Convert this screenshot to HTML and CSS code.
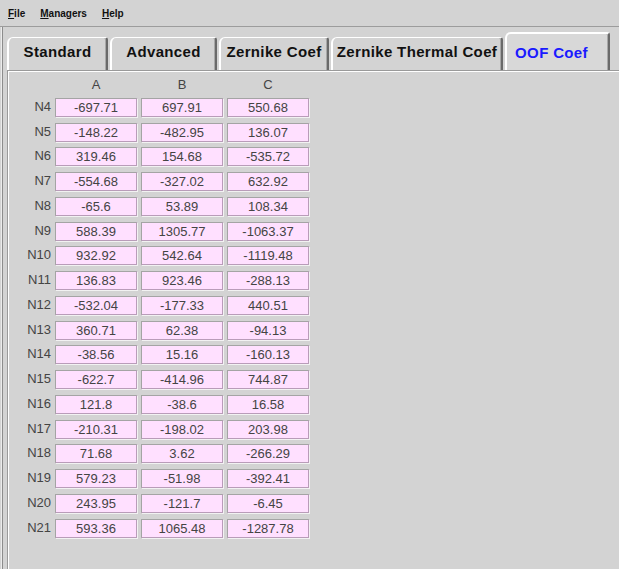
FILE: index.html
```html
<!DOCTYPE html>
<html lang="en">
<head>
  <meta charset="UTF-8">
  <title>OOF Coef</title>
  <link rel="stylesheet" href="styles.css">
</head>
<body>
  <div class="menubar">
    <span class="menu"><u>F</u>ile</span>
    <span class="menu"><u>M</u>anagers</span>
    <span class="menu"><u>H</u>elp</span>
  </div>

  <div class="frame">
    <div class="tabs">
      <div class="tab">Standard</div>
      <div class="tab">Advanced</div>
      <div class="tab">Zernike Coef</div>
      <div class="tab">Zernike Thermal Coef</div>
      <div class="tab selected">OOF Coef</div>
    </div>

    <div class="panel">
      <div class="coef-grid">
        <span></span><span class="col-head">A</span><span class="col-head">B</span><span class="col-head">C</span>

        <span class="row-label">N4</span><span class="cell">-697.71</span><span class="cell">697.91</span><span class="cell">550.68</span>
        <span class="row-label">N5</span><span class="cell">-148.22</span><span class="cell">-482.95</span><span class="cell">136.07</span>
        <span class="row-label">N6</span><span class="cell">319.46</span><span class="cell">154.68</span><span class="cell">-535.72</span>
        <span class="row-label">N7</span><span class="cell">-554.68</span><span class="cell">-327.02</span><span class="cell">632.92</span>
        <span class="row-label">N8</span><span class="cell">-65.6</span><span class="cell">53.89</span><span class="cell">108.34</span>
        <span class="row-label">N9</span><span class="cell">588.39</span><span class="cell">1305.77</span><span class="cell">-1063.37</span>
        <span class="row-label">N10</span><span class="cell">932.92</span><span class="cell">542.64</span><span class="cell">-1119.48</span>
        <span class="row-label">N11</span><span class="cell">136.83</span><span class="cell">923.46</span><span class="cell">-288.13</span>
        <span class="row-label">N12</span><span class="cell">-532.04</span><span class="cell">-177.33</span><span class="cell">440.51</span>
        <span class="row-label">N13</span><span class="cell">360.71</span><span class="cell">62.38</span><span class="cell">-94.13</span>
        <span class="row-label">N14</span><span class="cell">-38.56</span><span class="cell">15.16</span><span class="cell">-160.13</span>
        <span class="row-label">N15</span><span class="cell">-622.7</span><span class="cell">-414.96</span><span class="cell">744.87</span>
        <span class="row-label">N16</span><span class="cell">121.8</span><span class="cell">-38.6</span><span class="cell">16.58</span>
        <span class="row-label">N17</span><span class="cell">-210.31</span><span class="cell">-198.02</span><span class="cell">203.98</span>
        <span class="row-label">N18</span><span class="cell">71.68</span><span class="cell">3.62</span><span class="cell">-266.29</span>
        <span class="row-label">N19</span><span class="cell">579.23</span><span class="cell">-51.98</span><span class="cell">-392.41</span>
        <span class="row-label">N20</span><span class="cell">243.95</span><span class="cell">-121.7</span><span class="cell">-6.45</span>
        <span class="row-label">N21</span><span class="cell">593.36</span><span class="cell">1065.48</span><span class="cell">-1287.78</span>
      </div>
    </div>
  </div>
</body>
</html>
```

FILE: styles.css
```css
html, body {
  height: 100%;
}
body {
  margin: 0;
  background: #d3d3d3;
  font-family: "Liberation Sans", Arial, sans-serif;
  color: #222;
  overflow: hidden;
  display: flex;
  flex-direction: column;
}
.menubar {
  display: flex;
  gap: 15px;
  height: 26px;
  flex: none;
  align-items: center;
  padding-left: 8px;
  border-bottom: 1px solid #9c9c9c;
  font-size: 10px;
  font-weight: bold;
  color: #111;
}
.menu u {
  text-decoration-thickness: 1px;
}
.frame {
  flex: 1;
  display: flex;
  flex-direction: column;
  margin-left: 2px;
  padding-left: 4px;
  border-left: 1px solid #8c8c8c;
  box-shadow: -1px 0 0 #ececec;
}
.tabs {
  display: flex;
  align-items: flex-end;
  gap: 2px;
  padding-top: 5px;
  height: 38px;
  flex: none;
}
.tab {
  box-sizing: border-box;
  height: 33px;
  display: flex;
  align-items: center;
  justify-content: center;
  padding-bottom: 5px;
  font-size: 15px;
  font-weight: bold;
  letter-spacing: 0.35px;
  color: #111;
  border-top: 1px solid #fff;
  border-left: 2px solid #fff;
  border-right: 2px solid #6a6a6a;
  border-top-left-radius: 6px;
  border-top-right-radius: 3px;
  box-shadow: inset -1px 0 0 #a8a8a8;
}
.tab:nth-child(1) { width: 101px; }
.tab:nth-child(2) { width: 107px; }
.tab:nth-child(3) { width: 110px; }
.tab:nth-child(4) { width: 172px; }
.tab.selected {
  width: 105px;
  height: 38px;
  padding-bottom: 0;
  padding-right: 12px;
  color: #1a1aff;
  background: #d8d8d8;
  border-top: 2px solid #fff;
}
.panel {
  flex: 1;
  border-top: 1px solid #9a9a9a;
  border-left: 1px solid #9a9a9a;
  box-shadow: inset 1px 1px 0 #fff;
  padding: 6px 0 0 1px;
}
.coef-grid {
  display: grid;
  grid-template-columns: 42px repeat(3, 82px);
  grid-template-rows: 15px;
  grid-auto-rows: 19px;
  column-gap: 4px;
  row-gap: 5.75px;
  font-size: 13px;
}
.col-head {
  text-align: center;
  line-height: 15px;
  color: #444;
}
.row-label {
  text-align: right;
  line-height: 17px;
  color: #444;
}
.cell {
  box-sizing: border-box;
  background: #ffe0ff;
  border-top: 1px solid #a4a4a4;
  border-left: 1px solid #a4a4a4;
  border-right: 1px solid #b99cb9;
  border-bottom: 1px solid #b99cb9;
  box-shadow: 1px 1px 0 #f2f2f2;
  text-align: center;
  line-height: 17px;
  color: #444;
}
```
